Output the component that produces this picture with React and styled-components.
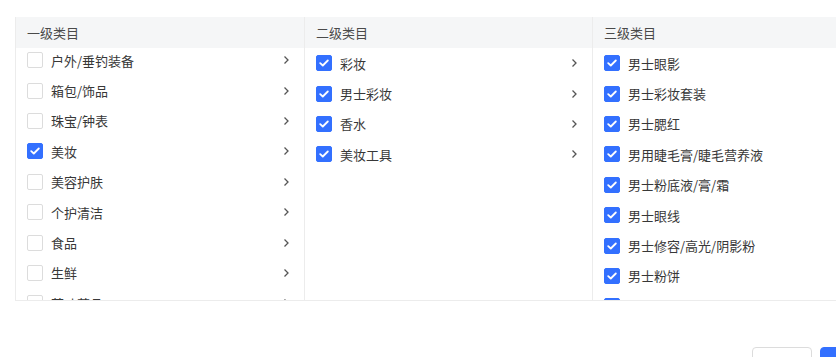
import React, { useEffect, useRef } from "react";
import styled, { createGlobalStyle } from "styled-components";

const Global = createGlobalStyle`
  html, body { margin: 0; padding: 0; background: #fff; overflow: hidden; }
  body { font-family: "Noto Sans CJK SC", "Noto Sans", sans-serif; }
`;

const Page = styled.div`
  padding: 17px 0 0 15px;
  width: 880px;
  box-sizing: border-box;
`;

const Panel = styled.div`
  display: grid;
  grid-template-columns: 288px 288px 288px;
  border: 1px solid #ececec;
  border-top: none;
  width: 865px;
  box-sizing: border-box;
`;

const Column = styled.div`
  display: flex;
  flex-direction: column;
  border-left: ${(p) => (p.$first ? "none" : "1px solid #ececec")};
  min-width: 0;
`;

const Header = styled.div`
  height: 31px;
  background: #f5f6f7;
  display: flex;
  align-items: center;
  padding-left: 11px;
  font-size: 13px;
  color: #4a4a4a;
`;

const List = styled.div`
  height: 252px;
  overflow-y: auto;
  scrollbar-width: none;
  &::-webkit-scrollbar { display: none; }
`;

const Row = styled.div`
  height: 30.4px;
  display: flex;
  align-items: center;
  padding: 0 12px 0 11px;
  font-size: 13px;
  color: #383838;
`;

const Box = styled.span`
  width: 16px;
  height: 16px;
  box-sizing: border-box;
  border-radius: 2px;
  flex: none;
  display: inline-flex;
  align-items: center;
  justify-content: center;
  background: ${(p) => (p.$checked ? "#3370ff" : "#fff")};
  border: 1px solid ${(p) => (p.$checked ? "#3370ff" : "#dcdcdc")};
`;

const Label = styled.span`
  margin-left: 8px;
  flex: 1;
  white-space: nowrap;
`;

const Chevron = styled.svg`
  width: 8px;
  height: 10px;
  flex: none;
  margin-right: 2px;
`;

const Footer = styled.div`
  display: flex;
  justify-content: flex-end;
  gap: 8px;
  padding-top: 46px;
  width: 865px;
`;

const Button = styled.button`
  width: 60px;
  height: 32px;
  border-radius: 4px;
  font-family: inherit;
  font-size: 13px;
  border: 1px solid ${(p) => (p.$primary ? "#3370ff" : "#dcdcdc")};
  background: ${(p) => (p.$primary ? "#3370ff" : "#fff")};
  color: ${(p) => (p.$primary ? "#fff" : "#333")};
`;

const Check = () => (
  <svg width="10" height="8" viewBox="0 0 10 8">
    <path d="M1.2 4.1 L3.8 6.5 L8.8 1.5" fill="none" stroke="#fff" strokeWidth="1.8" strokeLinecap="round" strokeLinejoin="round" />
  </svg>
);

const Arrow = () => (
  <Chevron viewBox="0 0 8 10">
    <path d="M2.5 1.5 L6 5 L2.5 8.5" fill="none" stroke="#555" strokeWidth="1.3" />
  </Chevron>
);

const level1 = [
  ["户外/垂钓装备", false],
  ["箱包/饰品", false],
  ["珠宝/钟表", false],
  ["美妆", true],
  ["美容护肤", false],
  ["个护清洁", false],
  ["食品", false],
  ["生鲜", false],
  ["茶叶茗品", false],
  ["酒水饮料", false],
];
const level2 = [
  ["彩妆", true],
  ["男士彩妆", true],
  ["香水", true],
  ["美妆工具", true],
];
const level3 = [
  "男士眼影",
  "男士彩妆套装",
  "男士腮红",
  "男用睫毛膏/睫毛营养液",
  "男士粉底液/膏/霜",
  "男士眼线",
  "男士修容/高光/阴影粉",
  "男士粉饼",
  "男士遮瑕",
  "男士眉笔",
];

const Item = ({ label, checked, arrow }) => (
  <Row>
    <Box $checked={checked}>{checked && <Check />}</Box>
    <Label>{label}</Label>
    {arrow && <Arrow />}
  </Row>
);

export default function App() {
  const firstRef = useRef(null);
  useEffect(() => {
    if (firstRef.current) firstRef.current.scrollTop = 3;
  }, []);
  return (
    <Page>
      <Global />
      <Panel>
        <Column $first>
          <Header>一级类目</Header>
          <List ref={firstRef}>
            {level1.map(([l, c]) => (
              <Item key={l} label={l} checked={c} arrow />
            ))}
          </List>
        </Column>
        <Column>
          <Header>二级类目</Header>
          <List>
            {level2.map(([l, c]) => (
              <Item key={l} label={l} checked={c} arrow />
            ))}
          </List>
        </Column>
        <Column>
          <Header>三级类目</Header>
          <List>
            {level3.map((l) => (
              <Item key={l} label={l} checked />
            ))}
          </List>
        </Column>
      </Panel>
      <Footer>
        <Button>取消</Button>
        <Button $primary>确定</Button>
      </Footer>
    </Page>
  );
}
